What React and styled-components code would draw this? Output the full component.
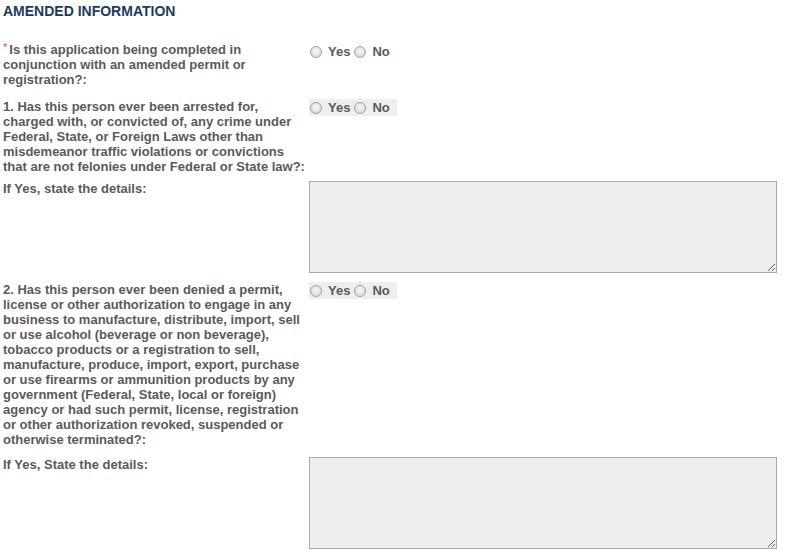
import React from "react";
import styled, { createGlobalStyle } from "styled-components";

const GlobalStyle = createGlobalStyle`
   body {
      margin: 0;
      background: #ffffff;
      font-family: "Liberation Sans", Arial, sans-serif;
   }
`;

const Page = styled.div`
   padding: 4px 0 0 3px;
   width: 786px;
   font-size: 13px;
   line-height: 15px;
   font-weight: bold;
   color: #5a5a5a;
`;

const Title = styled.h3`
   margin: 0;
   font-size: 14px;
   line-height: 15px;
   font-weight: bold;
   color: #1c3a5c;
   text-transform: uppercase;
`;

const Row = styled.div`
   display: grid;
   grid-template-columns: 306px 468px;
   align-items: start;
   margin-top: ${(p) => p.$space}px;
`;

const Label = styled.div`
   width: 305px;
`;

const Required = styled.span`
   display: inline-block;
   color: #d9534f;
   font-weight: normal;
   font-size: 11px;
   line-height: 11px;
   vertical-align: top;
   margin-right: 2px;
`;

const RadioGroup = styled.div`
   display: inline-flex;
   align-items: center;
   justify-self: start;
   height: 17px;
   padding: 0 7px 0 1px;
   margin-top: ${(p) => (p.$shaded ? 0 : 1)}px;
   background: ${(p) => (p.$shaded ? "#eeeeee" : "transparent")};
`;

const Option = styled.label`
   display: inline-flex;
   align-items: center;
   gap: 6px;
   margin-right: 4px;
   line-height: 17px;

   &:last-child {
      margin-right: 0;
   }
`;

const Radio = styled.input`
   appearance: none;
   width: 12px;
   height: 12px;
   margin: 0;
   border-radius: 50%;
   border: 1px solid #a2a2a2;
   background: radial-gradient(circle at 50% 40%, #f6f6f6 0%, #e2e2e2 60%, #cfcfcf 100%);
   box-sizing: border-box;
`;

const Details = styled.textarea`
   display: block;
   box-sizing: border-box;
   width: 468px;
   height: ${(p) => p.$height}px;
   margin: 0;
   border: 1px solid #a9a9a9;
   background: #ededed;
   font-family: "Liberation Sans", Arial, sans-serif;
   font-size: 13px;
   resize: both;
`;

const YesNo = ({ name, shaded }) => (
   <RadioGroup $shaded={shaded}>
      <Option>
         <Radio type="radio" name={name} />
         Yes
      </Option>
      <Option>
         <Radio type="radio" name={name} />
         No
      </Option>
   </RadioGroup>
);

const App = () => {
   return (
      <>
         <GlobalStyle />
         <Page>
            <Title>Amended Information</Title>

            <Row $space={23}>
               <Label>
                  <Required>*</Required>Is this application being completed in conjunction
                  with an amended permit or registration?:
               </Label>
               <YesNo name="amended" />
            </Row>

            <Row $space={12}>
               <Label>
                  1. Has this person ever been arrested for, charged with, or convicted of, any
                  crime under Federal, State, or Foreign Laws other than misdemeanor traffic
                  violations or convictions that are not felonies under Federal or State law?:
               </Label>
               <YesNo name="arrested" shaded />
            </Row>

            <Row $space={7}>
               <Label>If Yes, state the details:</Label>
               <Details $height={92} />
            </Row>

            <Row $space={9}>
               <Label>
                  2. Has this person ever been denied a permit, license or other authorization
                  to engage in any business to manufacture, distribute, import, sell or use
                  alcohol (beverage or non beverage), tobacco products or a registration to
                  sell, manufacture, produce, import, export, purchase or use firearms or
                  ammunition products by any government (Federal, State, local or foreign)
                  agency or had such permit, license, registration or other authorization
                  revoked, suspended or otherwise terminated?:
               </Label>
               <YesNo name="denied" shaded />
            </Row>

            <Row $space={10}>
               <Label>If Yes, State the details:</Label>
               <Details $height={92} />
            </Row>
         </Page>
      </>
   );
};

export default App;
